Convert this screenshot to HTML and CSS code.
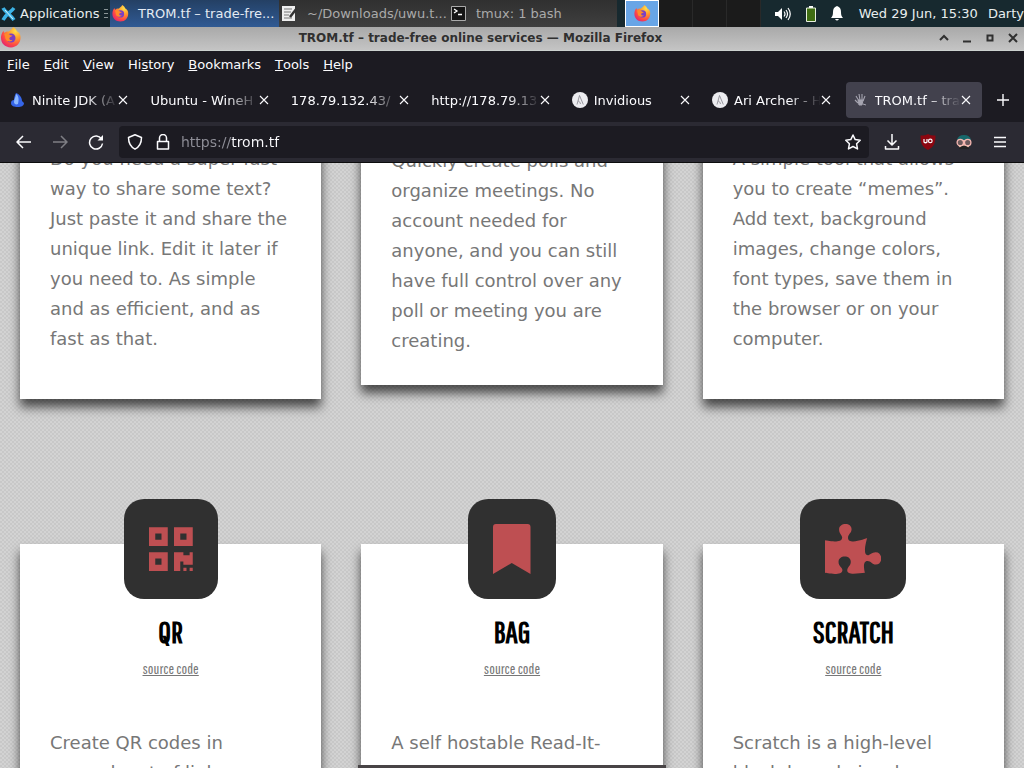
FILE: index.html
```html
<!DOCTYPE html>
<html lang="en">
<head>
    <meta charset="UTF-8">
    <meta name="viewport" content="width=device-width, initial-scale=1.0">
    <title>TROM.tf – trade-free online services</title>
    <link rel="stylesheet" href="styles.css">
</head>
<body>

    <!-- Shared icons -->
    <svg class="defs" width="0" height="0" aria-hidden="true">
        <defs>
            <radialGradient id="fox" cx="0.75" cy="0.2" r="0.9">
                <stop offset="0" stop-color="#ffe14a"/>
                <stop offset="0.4" stop-color="#ff9a2e"/>
                <stop offset="0.75" stop-color="#ff4a45"/>
                <stop offset="1" stop-color="#e3286f"/>
            </radialGradient>
            <symbol id="firefox" viewBox="0 0 20 20">
                <path fill="url(#fox)" d="M12 0c2 1 3 2.500 3.600 4 1 .2 2.500 1.700 3 3.200C20.500 13.500 16.500 19.500 10 19.500S0 15 .5 9C.8 6.500 2 4.500 3 3.500c0 1 .3 1.500.8 2C5 4.500 6.500 4 8 4.300 9.500 3 11 2 12 0z"/>
                <circle cx="10" cy="10.500" r="4.300" fill="#7b3fc4"/>
                <path fill="#ff8a2a" d="M3.500 6.500c2-.8 4.500-.2 6 1.300l2 .4c-.5 1.300-2.500 1.200-3 2.200-.4 1.200.8 2.400 3 1.800-1 2.300-5.500 2.200-6.700-.8C4.300 9.500 4.300 8 3.500 6.500z"/>
            </symbol>
            <symbol id="close" viewBox="0 0 10 10">
                <path d="M1 1l8 8M9 1L1 9" stroke="#fbfbfe" stroke-width="1.100" fill="none"/>
            </symbol>
            <symbol id="letter-a" viewBox="0 0 16 16">
                <circle cx="8" cy="8" r="8" fill="#ececf0"/>
                <path d="M5 12.500L7.500 3.500l3.800 9M6 9c1 0 2 1 2.500 3" stroke="#8d8d95" stroke-width="0.900" fill="none"/>
            </symbol>
        </defs>
    </svg>

    <header class="panel">
        <button class="panel-menu">
            <svg width="17" height="16" viewBox="0 0 17 16"><path d="M3 2c2 4 7 6 11 12M14 2C11 6 6 8 3 14" stroke="#3cb3e6" stroke-width="3.500" fill="none"/><path d="M5 4l8 9" stroke="#d9f2fc" stroke-width="1"/></svg>
            Applications
            <span class="grip"></span>
        </button>
        <button class="task task-active">
            <svg width="17" height="17"><use href="#firefox"/></svg>
            <span>TROM.tf – trade-fre...</span>
        </button>
        <button class="task">
            <svg width="17" height="17" viewBox="0 0 17 17"><path d="M1 1h13v15H1z" fill="#eee"/><path d="M3 4h8M3 7h7M3 10h5M3 13h8" stroke="#777"/><path d="M16 3l-7 9" stroke="#333" stroke-width="2.500"/></svg>
            <span>~/Downloads/uwu.t...</span>
        </button>
        <button class="task">
            <svg width="17" height="17" viewBox="0 0 17 17"><path d="M1.500 1.500h14v14h-14z" fill="#151515" stroke="#aaa"/><path d="M4 4l3 2-3 2M8 9.500h4" stroke="#fff" stroke-width="1.300" fill="none"/></svg>
            <span>tmux: 1 bash</span>
        </button>
        <div class="pager">
            <button class="desk desk-active" aria-label="Workspace 1"><svg width="17" height="17"><use href="#firefox"/></svg></button>
            <button class="desk" aria-label="Workspace 2"></button>
            <button class="desk" aria-label="Workspace 3"></button>
            <button class="desk" aria-label="Workspace 4"></button>
        </div>
        <div class="tray">
            <svg width="16" height="14" viewBox="0 0 16 14"><path d="M0 5h3l4-4v12L3 9H0z" fill="#fff"/><path d="M9 4.500q2 2.500 0 5M11 3q3 4 0 8M13 1q4.500 6 0 12" stroke="#fff" stroke-width="1.200" fill="none"/></svg>
            <svg width="10" height="16" viewBox="0 0 10 16"><path d="M3 0h4v2H3z" fill="#fff"/><path d="M.5 2h9v13.500h-9z" fill="#3f6d12" stroke="#e8f0e0"/></svg>
            <svg width="12" height="15" viewBox="0 0 12 15"><path d="M6 0c3 1 4 3 4 6 0 3 .5 4 2 6H0c1.500-2 2-3 2-6 0-3 1-5 4-6zM4 13h4q-2 3-4 0z" fill="#fff"/></svg>
        </div>
        <span class="clock">Wed 29 Jun, 15:30</span>
        <span class="user">Darty</span>
    </header>

    <div class="titlebar">
        <svg width="22" height="21"><use href="#firefox"/></svg>
        <span class="window-title">TROM.tf – trade-free online services — Mozilla Firefox</span>
        <div class="window-buttons">
            <button aria-label="Shade"><svg width="10" height="10" viewBox="0 0 10 10"><path d="M1 7l4-4 4 4"/></svg></button>
            <button aria-label="Minimize"><svg width="10" height="10" viewBox="0 0 10 10"><path d="M1 8.500h8"/></svg></button>
            <button aria-label="Maximize"><svg width="10" height="10" viewBox="0 0 10 10"><path d="M2.500 2.500h5v5h-5z"/></svg></button>
            <button aria-label="Close"><svg width="10" height="10" viewBox="0 0 10 10"><path d="M1 1l8 8M9 1L1 9"/></svg></button>
        </div>
    </div>

    <nav class="menubar">
        <button><u>F</u>ile</button>
        <button><u>E</u>dit</button>
        <button><u>V</u>iew</button>
        <button>Hi<u>s</u>tory</button>
        <button><u>B</u>ookmarks</button>
        <button><u>T</u>ools</button>
        <button><u>H</u>elp</button>
    </nav>

    <div class="tabs">
        <div class="tab">
            <svg width="16" height="16" viewBox="0 0 16 16"><path d="M6 1c3 1 6 4 6 8l2 2c0 3-3 4-6 4-4 0-7-1-7-4 0-2 1-3 3-3 0-3 1-5 2-7z" fill="#3565e8"/><path d="M6 2c3 2 3 6 2 10-2 1-4 0-4-2 0-3 2-5 2-8z" fill="#8db9ff"/></svg>
            <span class="tab-title">Ninite JDK (A</span>
            <button aria-label="Close tab"><svg width="10" height="10"><use href="#close"/></svg></button>
        </div>
        <div class="tab">
            <span class="tab-title">Ubuntu - WineH</span>
            <button aria-label="Close tab"><svg width="10" height="10"><use href="#close"/></svg></button>
        </div>
        <div class="tab">
            <span class="tab-title">178.79.132.43/</span>
            <button aria-label="Close tab"><svg width="10" height="10"><use href="#close"/></svg></button>
        </div>
        <div class="tab">
            <span class="tab-title">http://178.79.13</span>
            <button aria-label="Close tab"><svg width="10" height="10"><use href="#close"/></svg></button>
        </div>
        <div class="tab">
            <svg width="16" height="16"><use href="#letter-a"/></svg>
            <span class="tab-title">Invidious</span>
            <button aria-label="Close tab"><svg width="10" height="10"><use href="#close"/></svg></button>
        </div>
        <div class="tab">
            <svg width="16" height="16"><use href="#letter-a"/></svg>
            <span class="tab-title">Ari Archer - H</span>
            <button aria-label="Close tab"><svg width="10" height="10"><use href="#close"/></svg></button>
        </div>
        <div class="tab tab-active">
            <svg width="16" height="16" viewBox="0 0 16 16"><path d="M3 4l3 5M6 2l1 6M9 2v6M12 4l-2 5M2 8l3 3" stroke="#a5a4b0" stroke-width="1.100"/><path d="M5 8h5l-1 5H6zM10 12l3 1" fill="#a5a4b0" stroke="#a5a4b0"/></svg>
            <span class="tab-title">TROM.tf – tra</span>
            <button aria-label="Close tab"><svg width="10" height="10"><use href="#close"/></svg></button>
        </div>
        <button class="new-tab" aria-label="New tab"><svg width="12" height="12" viewBox="0 0 12 12"><path d="M6 0v12M0 6h12" stroke="#fbfbfe" stroke-width="1.400"/></svg></button>
    </div>

    <div class="toolbar">
        <button aria-label="Back"><svg width="16" height="16" viewBox="0 0 16 16"><path d="M15 8H1.500M7 2L1 8l6 6"/></svg></button>
        <button class="disabled" aria-label="Forward"><svg width="16" height="16" viewBox="0 0 16 16"><path d="M1 8h13.500M9 2l6 6-6 6"/></svg></button>
        <button aria-label="Reload"><svg width="16" height="16" viewBox="0 0 16 16"><path d="M13.500 5A6.500 6.500 0 1 0 14.500 9.500"/><path d="M15 1v5.500H9.500z" fill="#fbfbfe" stroke="none"/></svg></button>
        <div class="urlbar">
            <svg width="16" height="16" viewBox="0 0 16 16"><path d="M8 .8L14.500 3.500c0 5-1.500 9-6.500 11.700C3 12.500 1.500 8.500 1.500 3.500z"/></svg>
            <svg width="16" height="16" viewBox="0 0 16 16"><path d="M4.500 7.500V4a3.500 3.500 0 0 1 7 0v3.500M2.500 7.500h11v7.500h-11z"/></svg>
            <input type="text" class="url" value="https://trom.tf" aria-label="Address">
            <svg width="16" height="16" viewBox="0 0 16 16"><path d="M8 1l2.200 4.600 5 .7-3.600 3.500.9 5.100L8 12.500l-4.500 2.400.9-5.100L.8 6.300l5-.7z"/></svg>
        </div>
        <button aria-label="Downloads"><svg width="16" height="16" viewBox="0 0 16 16"><path d="M8 0v11M3.500 6.500L8 11l4.500-4.500M1.500 12v3h13v-3"/></svg></button>
        <button aria-label="uBlock Origin"><svg width="16" height="16" viewBox="0 0 16 16"><path d="M8 0q3 2 7.500 1.500C15.500 9 14 13 8 16 2 13 .5 9 .5 1.500 5 2 8 0 8 0z" fill="#8b0610" stroke="none"/><path d="M4 5v3q1.500 1.500 3 0V5" stroke-width="1.200"/><circle cx="10.300" cy="6.900" r="1.800" stroke-width="1.200"/></svg></button>
        <button aria-label="Privacy mask"><svg width="16" height="16" viewBox="0 0 16 16"><path d="M2 5h12v6q-2 4-6 4t-6-4z" fill="#e8c2ad" stroke="none"/><path d="M1 6q1-5 7-5t7 5z" fill="#17686b" stroke="none"/><path d="M3 14q5-5 10 0v1H3z" fill="#222" stroke="none"/><circle cx="4.300" cy="8.500" r="3.200" fill="#6b5a5c" stroke="#f5b6b0" stroke-width="1.300"/><circle cx="11.700" cy="8.500" r="3.200" fill="#6b5a5c" stroke="#f5b6b0" stroke-width="1.300"/></svg></button>
        <button aria-label="Menu"><svg width="16" height="16" viewBox="0 0 16 16"><path d="M2 3.500h12M2 8h12M2 12.500h12"/></svg></button>
    </div>

    <main class="page">
        <section class="row row-first">
            <article class="card card-cut">
                <p>Do you need a super fast way to share some text? Just paste it and share the unique link. Edit it later if you need to. As simple and as efficient, and as fast as that.</p>
            </article>
            <article class="card card-cut card-short">
                <p>Quickly create polls and organize meetings. No account needed for anyone, and you can still have full control over any poll or meeting you are creating.</p>
            </article>
            <article class="card card-cut">
                <p>A simple tool that allows you to create “memes”. Add text, background images, change colors, font types, save them in the browser or on your computer.</p>
            </article>
        </section>

        <section class="row">
            <article class="card">
                <div class="badge">
                    <svg height="50" viewBox="0 0 448 512"><path d="M0 224h192V32H0v192zM64 96h64v64H64V96zm192-64v192h192V32H256zm128 128h-64V96h64v64zM0 480h192V288H0v192zm64-128h64v64H64v-64zm352-64h32v128h-96v-32h-32v96h-64V288h96v32h64v-32zm0 160h32v32h-32v-32zm-64 0h32v32h-32v-32z"/></svg>
                </div>
                <h2>QR</h2>
                <a href="#">source code</a>
                <p>Create QR codes in several sort of links.</p>
            </article>
            <article class="card">
                <div class="badge">
                    <svg height="50" viewBox="0 0 384 512"><path d="M0 512V30Q0 0 30 0h324q30 0 30 30v482L192 400z"/></svg>
                </div>
                <h2>BAG</h2>
                <a href="#">source code</a>
                <p>A self hostable Read-It-Later application allowing you to save pages.</p>
            </article>
            <article class="card">
                <div class="badge">
                    <svg height="50" viewBox="0 0 576 512"><path d="M519.442 288.651c-41.519 0-59.500 31.593-82.058 31.593C377.409 320.244 432 144 432 144s-196.288 80-196.288-3.297c0-35.827 36.288-46.250 36.288-85.985C272 19.216 243.885 0 210.539 0c-34.654 0-66.366 18.891-66.366 56.346 0 41.364 31.711 59.277 31.711 81.750C175.885 207.719 0 166.758 0 166.758v333.237s178.635 41.047 178.635-28.662c0-22.473-40-40.107-40-81.471 0-37.456 29.250-56.346 63.577-56.346 33.673 0 61.788 19.216 61.788 54.717 0 39.735-36.288 50.158-36.288 85.985 0 60.803 129.675 25.730 181.230 25.730 0 0-34.725-120.101 25.827-120.101 35.962 0 46.423 36.152 86.308 36.152C556.712 416 576 387.990 576 354.443c0-34.199-18.962-65.792-56.558-65.792z"/></svg>
                </div>
                <h2>SCRATCH</h2>
                <a href="#">source code</a>
                <p>Scratch is a high-level block-based visual programming language.</p>
            </article>
        </section>
        <div class="bottom-strip"></div>
    </main>

</body>
</html>
```
FILE: styles.css
```css
* {
    box-sizing: border-box;
}
body {
    margin: 0;
    height: 100vh;
    display: flex;
    flex-direction: column;
    overflow: hidden;
    font-family: "DejaVu Sans", sans-serif;
    font-size: 13px;
    color: #fbfbfe;
}
button {
    display: flex;
    align-items: center;
    padding: 0;
    border: none;
    background: none;
    color: inherit;
    font: inherit;
}
svg {
    flex: none;
}
.defs {
    position: absolute;
}

/* Desktop panel */
.panel {
    display: flex;
    flex: none;
    height: 27px;
    align-items: center;
    background: #17292f;
    color: #e8eeee;
    white-space: nowrap;
}
.panel-menu {
    width: 110px;
    gap: 3px;
    height: 100%;
    background: #14242a;
}
.grip {
    width: 4px;
    height: 10px;
    margin-left: auto;
    margin-right: 2px;
    background: repeating-linear-gradient(#8a9597 0 1px, transparent 1px 4px);
}
.task {
    width: 169px;
    height: 100%;
    padding-left: 2px;
    gap: 9px;
    background: linear-gradient(#303030, #3f3f3f);
    color: #aaa;
}
.task-active {
    background: linear-gradient(#244064, #305a94);
    color: #e4ebf3;
}
.pager {
    display: flex;
    height: 100%;
    margin-left: 8px;
    background: #1b1b1b;
}
.desk {
    width: 34px;
    justify-content: center;
    border-right: 1px solid #292929;
}
.desk-active {
    border: 1px solid #fff;
    background: #68a5e6;
}
.tray {
    display: flex;
    align-items: center;
    gap: 15px;
    margin-left: auto;
}
.clock {
    margin-left: 16px;
}
.user {
    margin-left: 10px;
}

/* Window title */
.titlebar {
    display: flex;
    flex: none;
    align-items: center;
    height: 24px;
    padding-bottom: 2px;
    background: linear-gradient(#a9a9a9, #c4c4c4);
    border-bottom: 1px solid #ccd2cf;
    color: #303030;
    font-size: 12px;
    font-weight: bold;
}
.window-title {
    flex: 1;
    text-align: center;
}
.window-buttons {
    display: flex;
    gap: 13px;
    padding-right: 6px;
}
.window-buttons path {
    fill: none;
    stroke: #303030;
    stroke-width: 2;
}

/* Firefox menus and tabs */
.menubar {
    display: flex;
    flex: none;
    gap: 14px;
    height: 27px;
    padding-left: 7px;
    background: #1c1b22;
}
.tabs {
    display: flex;
    flex: none;
    align-items: center;
    height: 44px;
    padding: 0 2px 0 1px;
    background: #1c1b22;
}
.tab {
    flex: 1;
    display: flex;
    align-items: center;
    min-width: 0;
    height: 36px;
    margin: 0 2px;
    padding: 0 11px 0 7px;
    border-radius: 4px;
}
.tab-active {
    background: #42414d;
}
.tab-title {
    flex: 1;
    overflow: hidden;
    white-space: nowrap;
    -webkit-mask-image: linear-gradient(to left, transparent, #000 32px);
    mask-image: linear-gradient(to left, transparent, #000 32px);
}
.tab svg + .tab-title {
    margin-left: 6px;
}
.new-tab {
    width: 38px;
    justify-content: center;
}
.toolbar {
    display: flex;
    flex: none;
    align-items: center;
    height: 41px;
    padding: 0 6px;
    background: #2b2a33;
    border-bottom: 1px solid #0c0c0d;
}
.toolbar > button {
    width: 36px;
    height: 32px;
    justify-content: center;
}
.toolbar svg {
    fill: none;
    stroke: #fbfbfe;
    stroke-width: 1.5;
    stroke-linejoin: round;
}
.disabled {
    opacity: 0.4;
}
.urlbar {
    flex: 1;
    display: flex;
    align-items: center;
    gap: 12px;
    height: 32px;
    margin: 0 5px;
    padding: 0 8px;
    border-radius: 4px;
    background: #1c1b22;
}
.url {
    flex: 1;
    min-width: 0;
    padding: 0;
    margin-left: -2px;
    border: none;
    font: 14px "DejaVu Sans", sans-serif;
    /* scheme is dimmed, host is bright */
    background: linear-gradient(to right, #8f8f98 50px, #fbfbfe 50px);
    -webkit-background-clip: text;
    background-clip: text;
    color: transparent;
}

/* Web page */
.page {
    position: relative;
    flex: 1;
    min-height: 0;
    overflow: hidden;
    background-color: #cdcdcd;
    background-image: repeating-conic-gradient(#c8c8c8 0 25%, #d3d3d3 0 50%);
    background-size: 4px 4px;
}
.row {
    display: grid;
    grid-template-columns: repeat(3, 1fr);
    gap: 40px;
    align-items: start;
    padding: 0 20px;
}
.row-first {
    margin-top: -38px;
    margin-bottom: 145px;
}
.card {
    display: flex;
    flex-direction: column;
    align-items: center;
    padding: 0 30px 30px;
    background: #fff;
    box-shadow: 0 8px 10px rgba(0, 0, 0, 0.65);
}
.card-cut {
    padding-top: 19px;
    padding-bottom: 45px;
}
.card-short {
    padding-top: 21px;
    padding-bottom: 29px;
}
.card p {
    width: 100%;
    margin: 0;
    color: #777;
    font-size: 18px;
    line-height: 30px;
}
.badge {
    margin-top: -45px;
    padding: 25px;
    height: 100px;
    border-radius: 20px;
    background: #303030;
}
.badge svg {
    display: block;
    fill: #be4f52;
}
.card h2 {
    margin: 12px 0 8px;
    color: #000;
    font-family: "Pathway Gothic One", "Roboto Condensed", "Liberation Sans", sans-serif;
    font-size: 31px;
    line-height: 40px;
}
.card a {
    margin-bottom: 49px;
    color: #777;
    font-family: "Pathway Gothic One", "Roboto Condensed", "Liberation Sans", sans-serif;
    font-size: 15px;
    line-height: 20px;
}
/* the last row grows past the window */
.row:last-of-type .card {
    min-height: 300px;
}
.bottom-strip {
    position: absolute;
    left: 35%;
    right: 35%;
    bottom: 0;
    height: 3px;
    background: #484446;
}
```
